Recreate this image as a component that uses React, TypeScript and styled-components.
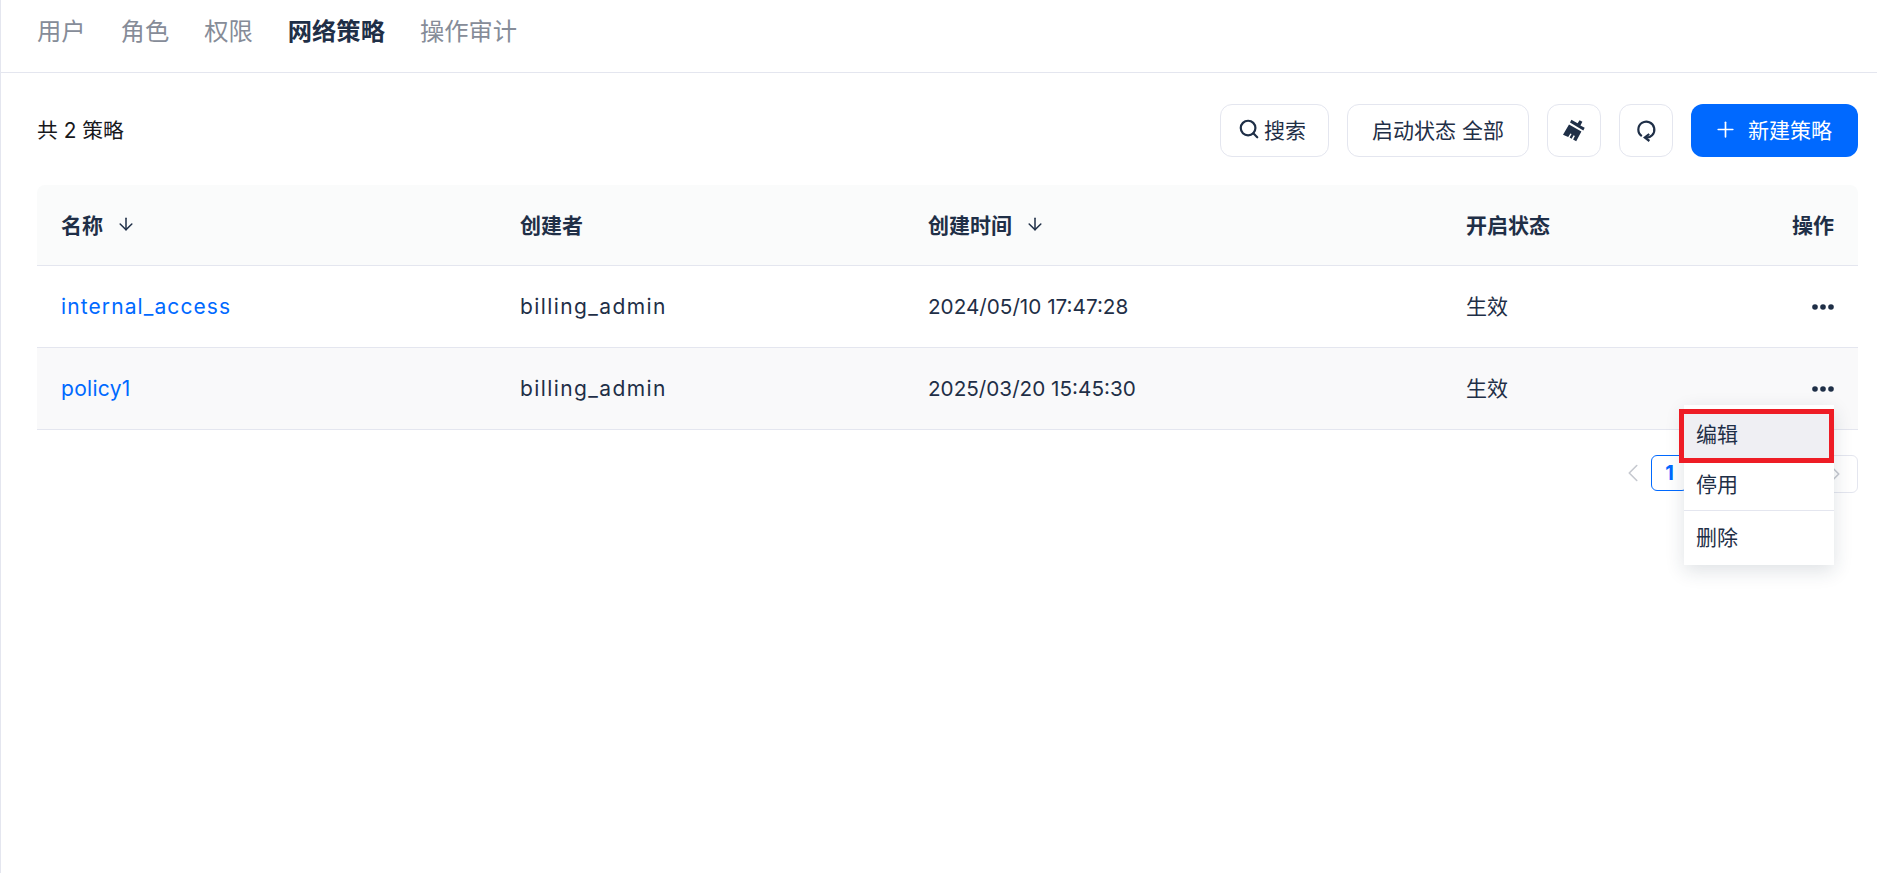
import { ArrowDown, ChevronLeft, ChevronRight, Plus, Search } from "lucide-react";
import styled, { createGlobalStyle } from "styled-components";

const FONT = `"Inter", "Noto Sans CJK SC", sans-serif`;

const GlobalStyle = createGlobalStyle`
  html, body {
    margin: 0;
    padding: 0;
    background: #fff;
  }
  * {
    box-sizing: border-box;
  }
`;

const Page = styled.div`
  position: relative;
  height: 873px;
  overflow: hidden;
  border-left: 1px solid #e4e6ef;
  background: #fff;
  font-family: ${FONT};
  color: #1f2f47;
`;

const TabBar = styled.div`
  display: flex;
  align-items: center;
  gap: 35px;
  height: 73px;
  padding: 0 0 10px 36px;
  border-bottom: 1px solid #e4e6ef;
`;

const Tab = styled.div<{ $active?: boolean }>`
  font-size: 24.3px;
  line-height: 60px;
  font-weight: ${(p) => (p.$active ? 700 : 400)};
  color: ${(p) => (p.$active ? "#1f2f47" : "#868c98")};
`;

const Content = styled.div`
  padding: 31px 19px 0 36px;
`;

const Toolbar = styled.div`
  display: flex;
  align-items: center;
  height: 53px;
`;

const Count = styled.div`
  padding-bottom: 3px;
  font-size: 20.8px;
  color: #17181c;
  margin-right: auto;
`;

const Actions = styled.div`
  display: flex;
  align-items: center;
  gap: 18px;
`;

const ToolButton = styled.button`
  display: flex;
  align-items: center;
  justify-content: center;
  gap: 6px;
  height: 53px;
  padding: 0 24px 3px;
  border: 1px solid #e4e6ef;
  border-radius: 12px;
  background: #fff;
  font-family: ${FONT};
  font-size: 21px;
  color: #1f2f47;
`;

const SearchButton = styled(ToolButton)`
  justify-content: flex-start;
  gap: 4px;
  width: 109px;
  padding: 0 0 3px 17px;
`;

const IconButton = styled(ToolButton)`
  width: 54px;
  padding: 0;
`;

const PrimaryButton = styled(ToolButton)`
  width: 167px;
  padding: 0 4px 3px 0;
  gap: 10px;
  border: none;
  background: #0069ff;
  color: #fff;
`;

const Table = styled.div`
  margin-top: 28px;
`;

const Row = styled.div<{ $head?: boolean; $shaded?: boolean }>`
  display: grid;
  grid-template-columns: 459px 408px 538px 1fr auto;
  align-items: center;
  height: ${(p) => (p.$head ? "81px" : "82px")};
  padding: 0 24px;
  border-bottom: 1px solid #e4e6ef;
  border-radius: ${(p) => (p.$head ? "8px 8px 0 0" : "0")};
  background: ${(p) => (p.$head ? "#fafbfb" : p.$shaded ? "#f9f9fa" : "#fff")};
  font-size: 21px;
`;

const HeadCell = styled.div`
  display: flex;
  align-items: center;
  gap: 13px;
  padding-bottom: 2px;
  font-weight: 700;
  color: #1f2f47;
`;

const Cell = styled.div<{ $spacing?: string }>`
  color: #1f2f47;
  letter-spacing: ${(p) => p.$spacing ?? "0"};
`;

const DateCell = styled(Cell)`
  font-size: 20.7px;
`;

const StatusCell = styled(Cell)`
  padding-bottom: 3px;
`;

const LinkCell = styled.a<{ $spacing: string }>`
  color: #0069ff;
  letter-spacing: ${(p) => p.$spacing};
`;

const MoreDots = styled.svg`
  display: block;
  width: 22px;
  height: 6px;
  fill: #1f2f47;
`;

const Pagination = styled.div`
  display: flex;
  align-items: flex-start;
  justify-content: flex-end;
  margin-top: 25px;
`;

const PrevArrow = styled.div`
  display: flex;
  align-items: center;
  width: 33px;
  height: 36px;
  color: #c6c9d0;
`;

const PageNumber = styled.div`
  display: flex;
  align-items: center;
  justify-content: center;
  width: 37px;
  height: 36px;
  margin-right: 124px;
  border: 1px solid #0069ff;
  border-radius: 6px;
  font-size: 20px;
  font-weight: 700;
  color: #0069ff;
`;

const NextButton = styled.div`
  display: flex;
  align-items: center;
  justify-content: center;
  width: 46px;
  height: 38px;
  border: 1px solid #e4e6ef;
  border-radius: 6px;
  color: #c6c9d0;
`;

const Menu = styled.div`
  position: absolute;
  top: 405px;
  left: 1683px;
  width: 150px;
  padding: 4px 0 0;
  background: #fff;
  box-shadow: 0 6px 18px rgba(31, 47, 71, 0.14);
`;

const MenuItem = styled.div<{ $active?: boolean; $divided?: boolean }>`
  display: flex;
  align-items: center;
  height: ${(p) => (p.$divided ? "55px" : p.$active ? "51px" : "50px")};
  padding: 0 0 ${(p) => (p.$active ? "3px" : "5px")} 12px;
  font-size: 21px;
  color: #1f2f47;
  background: ${(p) => (p.$active ? "#efeff3" : "#fff")};
  border-top: ${(p) => (p.$divided ? "1px solid #e4e6ef" : "none")};
`;

const Highlight = styled.div`
  position: absolute;
  top: 409px;
  left: 1678px;
  width: 155px;
  height: 54px;
  border: 5px solid #ee1c25;
`;

const BroomIcon = () => (
  <svg width="24" height="24" viewBox="0 0 24 24" fill="#1f2f47">
    <path d="M17.6 1.2l2.8 1.5-2 3.7 4.3 2.4-1.4 2.6L8 3.4l1.4-2.6 6.2 3.4z" />
    <path d="M7 5.6l12.4 6.9-5.2 9.7-3.1-1.7 1.8-3.6-1.3-.7-2 3.5-2-1.1 2-3.5-1.2-.7-2.2 3.5L1 15.7z" />
  </svg>
);

const RefreshIcon = () => (
  <svg width="24" height="24" viewBox="0 0 24 24" fill="none" stroke="#1f2f47" strokeWidth="2.2">
    <path d="M7.8 17.2A8 8 0 1 1 11 18.5" />
    <path d="M15.2 15L10.8 18.5L15.4 22" />
  </svg>
);

const Dots = () => (
  <MoreDots viewBox="0 0 22 6">
    <circle cx="3" cy="3" r="2.8" />
    <circle cx="11" cy="3" r="2.8" />
    <circle cx="19" cy="3" r="2.8" />
  </MoreDots>
);

const tabs = ["用户", "角色", "权限", "网络策略", "操作审计"];

const policies = [
  { name: "internal_access", nameSpacing: "1.1px", creator: "billing_admin", createdAt: "2024/05/10 17:47:28", status: "生效" },
  { name: "policy1", nameSpacing: "0.3px", creator: "billing_admin", createdAt: "2025/03/20 15:45:30", status: "生效" },
];

export default function App() {
  return (
    <Page>
      <GlobalStyle />
      <TabBar>
        {tabs.map((tab) => (
          <Tab key={tab} $active={tab === "网络策略"}>
            {tab}
          </Tab>
        ))}
      </TabBar>
      <Content>
        <Toolbar>
          <Count>共 2 策略</Count>
          <Actions>
            <SearchButton>
              <Search size={22} strokeWidth={2.4} />
              搜索
            </SearchButton>
            <ToolButton>启动状态 全部</ToolButton>
            <IconButton>
              <BroomIcon />
            </IconButton>
            <IconButton>
              <RefreshIcon />
            </IconButton>
            <PrimaryButton>
              <Plus size={25} strokeWidth={1.6} />
              新建策略
            </PrimaryButton>
          </Actions>
        </Toolbar>
        <Table>
          <Row $head>
            <HeadCell>
              名称 <ArrowDown size={20} strokeWidth={1.8} />
            </HeadCell>
            <HeadCell>创建者</HeadCell>
            <HeadCell>
              创建时间 <ArrowDown size={20} strokeWidth={1.8} />
            </HeadCell>
            <HeadCell>开启状态</HeadCell>
            <HeadCell>操作</HeadCell>
          </Row>
          {policies.map((policy, index) => (
            <Row key={policy.name} $shaded={index === 1}>
              <LinkCell $spacing={policy.nameSpacing}>{policy.name}</LinkCell>
              <Cell $spacing="1.4px">{policy.creator}</Cell>
              <DateCell>{policy.createdAt}</DateCell>
              <StatusCell>{policy.status}</StatusCell>
              <Dots />
            </Row>
          ))}
        </Table>
        <Pagination>
          <PrevArrow>
            <ChevronLeft size={30} strokeWidth={1.3} />
          </PrevArrow>
          <PageNumber>1</PageNumber>
          <NextButton>
            <ChevronRight size={30} strokeWidth={1.3} />
          </NextButton>
        </Pagination>
      </Content>
      <Menu>
        <MenuItem $active>编辑</MenuItem>
        <MenuItem>停用</MenuItem>
        <MenuItem $divided>删除</MenuItem>
      </Menu>
      <Highlight />
    </Page>
  );
}
